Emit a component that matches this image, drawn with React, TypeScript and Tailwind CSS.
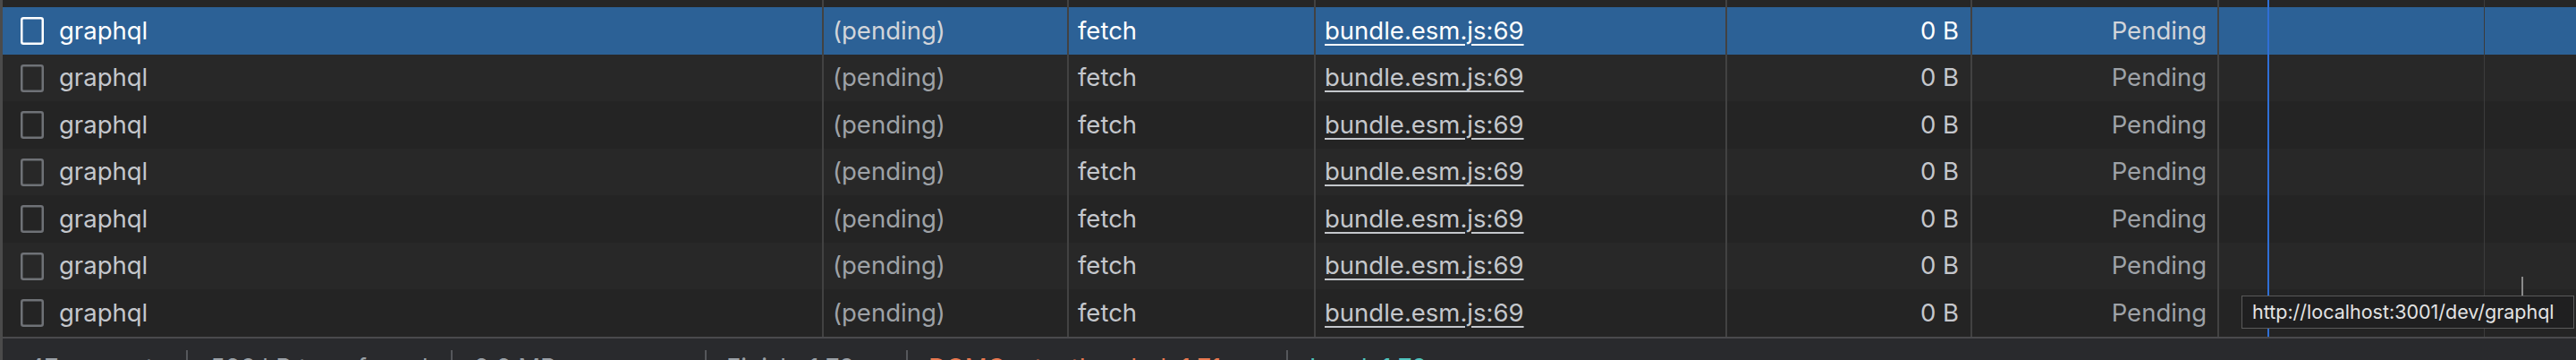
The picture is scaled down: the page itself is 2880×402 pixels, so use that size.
import React from "react";

type Row = { selected?: boolean; light: boolean; h: string; tick?: boolean };

const rows: Row[] = [
  { selected: true, light: false, h: "h-[53px]" },
  { light: true, h: "h-[52px]" },
  { light: false, h: "h-[53px]" },
  { light: true, h: "h-[52px]" },
  { light: false, h: "h-[53px]" },
  { light: true, h: "h-[52px]", tick: true },
  { light: false, h: "h-[53px]" },
];

const footerItems = [
  { text: "47 requests", cls: "text-[#9aa0a6]", w: "w-[205px] pl-[29px]" },
  { text: "526 kB transferred", cls: "text-[#9aa0a6]", w: "w-[296px] pl-[25px] border-l-2" },
  { text: "2.2 MB resources", cls: "text-[#9aa0a6]", w: "w-[284px] pl-[24px] border-l-2" },
  { text: "Finish: 1.79 s", cls: "text-[#9aa0a6]", w: "w-[225px] pl-[22px] border-l-2" },
  { text: "DOMContentLoaded: 1.71 s", cls: "text-[#e8784f]", w: "w-[425px] pl-[23px] border-l-2" },
  { text: "Load: 1.79 s", cls: "text-[#4fc3bd]", w: "w-[300px] pl-[24px] border-l-2" },
];

function DocIcon({ selected }: { selected?: boolean }) {
  return (
    <svg width="26" height="31" viewBox="0 0 26 31" className="shrink-0">
      <rect
        x="1.25"
        y="1.25"
        width="23.5"
        height="28.5"
        rx="2"
        fill="none"
        stroke={selected ? "#ffffff" : "#6f7277"}
        strokeWidth="2.5"
      />
    </svg>
  );
}

function RequestRow({ row }: { row: Row }) {
  const sel = row.selected;
  const bg = sel ? "bg-[#2c6196]" : row.light ? "bg-[#282828]" : "bg-[#242424]";
  const main = sel ? "text-white" : "text-[#c4c7cc]";
  const dim = sel ? "text-[#d2d5da]" : "text-[#9ea2a7]";
  const cell = "flex items-center border-l-2 border-[#424242] h-full";
  return (
    <div className={`flex ${row.h} ${bg}`}>
      <div className="flex items-center w-[916px] h-full pl-[20px] gap-[17px]">
        <DocIcon selected={sel} />
        <span className={main}>graphql</span>
      </div>
      <div className={`${cell} w-[274px] pl-[10px] ${dim}`}>(pending)</div>
      <div className={`${cell} w-[276px] pl-[10px] ${main}`}>fetch</div>
      <div className={`${cell} w-[460px] pl-[10px] ${main}`}>
        <span className="underline decoration-[2px] underline-offset-[5px]">bundle.esm.js:69</span>
      </div>
      <div className={`${cell} w-[274px] justify-end pr-[13px] ${main}`}>0 B</div>
      <div className={`${cell} w-[276px] justify-end pr-[12px] ${dim}`}>Pending</div>
      <div className={`${cell} w-[401px] relative`}>
        {row.tick && (
          <div className="absolute left-[338px] top-[38px] w-[2px] h-[23px] bg-[#8a8a8a]" />
        )}
      </div>
    </div>
  );
}

export default function App() {
  return (
    <div
      className="w-[2880px] h-[402px] overflow-hidden bg-[#242424] text-[27.5px] leading-none"
      style={{ fontFamily: "Inter, 'Noto Sans', sans-serif" }}
    >
      <div className="flex h-full">
        <div className="w-[3px] h-full bg-[#4b4b4b] shrink-0" />
        <div className="flex flex-col flex-1 h-full">
          {/* request table */}
          <div className="relative flex flex-col">
            <div className="flex h-[8px] bg-[#262626]">
              <div className="w-[916px]" />
              <div className="w-[274px] border-l-2 border-[#424242]" />
              <div className="w-[276px] border-l-2 border-[#424242]" />
              <div className="w-[460px] border-l-2 border-[#424242]" />
              <div className="w-[274px] border-l-2 border-[#424242]" />
              <div className="w-[276px] border-l-2 border-[#424242]" />
              <div className="w-[401px] border-l-2 border-[#424242]" />
            </div>
            {rows.map((r, i) => (
              <RequestRow key={i} row={r} />
            ))}
            {/* waterfall markers */}
            <div className="absolute top-0 bottom-0 left-[2532px] w-[2px] bg-[#2f6fd6]" />
            <div className="absolute top-0 bottom-0 left-[2774px] w-[1px] bg-[#3c3c3c]" />
            {/* url tooltip */}
            <div className="absolute left-[2503px] top-[330px] w-[372px] h-[37px] flex items-center pl-[11px] bg-[#1f1f20] border border-[#5a5a5a] text-[21.5px] text-[#e3e3e3] whitespace-nowrap overflow-hidden">
              http://localhost:3001/dev/graphql
            </div>
          </div>
          {/* status bar */}
          <div className="flex-1 border-t-2 border-[#4a4a4d] bg-[#292a2d] flex items-start">
            {footerItems.map((f) => (
              <div
                key={f.text}
                className={`shrink-0 mt-[13px] h-[40px] pt-[6px] border-[#55575b] whitespace-nowrap ${f.w}`}
              >
                <span className={f.cls}>{f.text}</span>
              </div>
            ))}
          </div>
        </div>
      </div>
    </div>
  );
}
